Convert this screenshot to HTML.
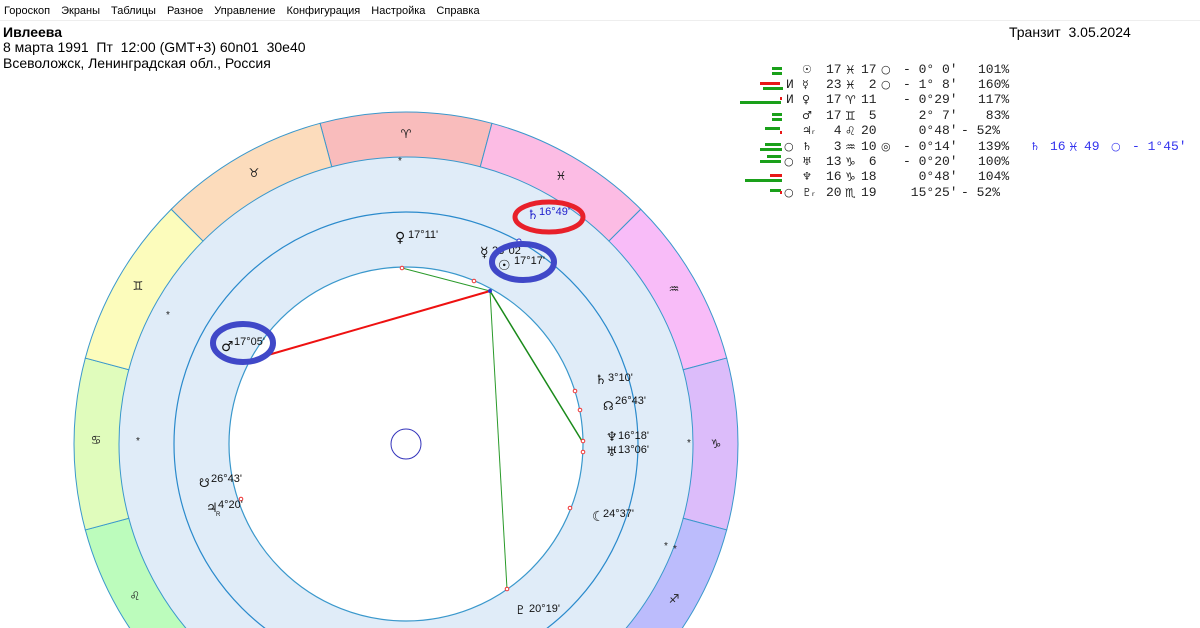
<!DOCTYPE html>
<html><head><meta charset="utf-8">
<style>
html,body{margin:0;padding:0;width:1200px;height:628px;overflow:hidden;background:#fff;}
body{position:relative;font-family:"Liberation Sans","DejaVu Sans",sans-serif;}
.menu{position:absolute;top:5px;left:4px;font-size:11px;color:#000;white-space:nowrap;}
.menu span{margin-right:11px;}
.hdr{position:absolute;left:3px;font-size:14px;white-space:nowrap;color:#000;}
.row{position:absolute;left:0;width:1200px;height:14px;font-family:"Liberation Mono","DejaVu Sans Mono",monospace;font-size:13px;color:#222;line-height:14px;}
.row i{position:absolute;font-style:normal;white-space:pre;top:0;}
.row .z{font-family:"DejaVu Sans",sans-serif;font-size:12px;}
.row .p{font-family:"DejaVu Sans",sans-serif;font-size:11px;}
.row .b{color:#3333ee}
.bar{position:absolute;height:3px;}
.g{background:#1aa01a}.r{background:#e81818}
svg{position:absolute;left:0;top:0;}
</style></head><body>
<svg width="1200" height="628" viewBox="0 0 1200 628" font-family="Liberation Sans, DejaVu Sans, sans-serif">
<defs>
<path id="sec" d="M -85.93 -320.69 A 332 332 0 0 1 85.93 -320.69 L 74.28 -277.22 A 287 287 0 0 0 -74.28 -277.22 Z" stroke="#3a98cc" stroke-width="1"/>
</defs>
<g transform="translate(406,444)">
<circle r="287" fill="#e0ecf8"/>
<use href="#sec" fill="#f9bcbc"/>
<use href="#sec" fill="#fcbce4" transform="rotate(30)"/>
<use href="#sec" fill="#f8bcf8" transform="rotate(60)"/>
<use href="#sec" fill="#dcbcfa" transform="rotate(90)"/>
<use href="#sec" fill="#bcbcfc" transform="rotate(120)"/>
<use href="#sec" fill="#bcd0fc" transform="rotate(150)"/>
<use href="#sec" fill="#bcf0f0" transform="rotate(180)"/>
<use href="#sec" fill="#bcfcd8" transform="rotate(210)"/>
<use href="#sec" fill="#bcfcbc" transform="rotate(240)"/>
<use href="#sec" fill="#e0fcbc" transform="rotate(270)"/>
<use href="#sec" fill="#fcfcbc" transform="rotate(300)"/>
<use href="#sec" fill="#fcdcbc" transform="rotate(330)"/>
<circle r="232" fill="none" stroke="#2a8acc" stroke-width="1.2"/>
<circle r="177" fill="#fff" stroke="#3a98cc" stroke-width="1.2"/>
<circle r="15" fill="none" stroke="#3333bb" stroke-width="1"/>
</g>
<g font-family="DejaVu Sans, sans-serif" font-size="12" fill="#222" text-anchor="middle">
<text x="406" y="138">♈&#xFE0E;</text>
<text x="561" y="180">♓&#xFE0E;</text>
<text x="674" y="293">♒&#xFE0E;</text>
<text x="716" y="448">♑&#xFE0E;</text>
<text x="674" y="603">♐&#xFE0E;</text>
<text x="254" y="177">♉&#xFE0E;</text>
<text x="138" y="290">♊&#xFE0E;</text>
<text x="96" y="444">♋&#xFE0E;</text>
<text x="135" y="600">♌&#xFE0E;</text>
</g>
<g font-size="10" fill="#222">
<text x="398" y="164">*</text><text x="166" y="318">*</text><text x="136" y="444">*</text>
<text x="687" y="446">*</text><text x="664" y="549">*</text><text x="673" y="552">*</text>
</g>
<line x1="402" y1="268" x2="490" y2="291" stroke="#2a9a2a" stroke-width="1"/>
<line x1="268" y1="355" x2="490" y2="291" stroke="#ee1111" stroke-width="2"/>
<line x1="490" y1="291" x2="582" y2="441" stroke="#1a8a1a" stroke-width="1.5"/>
<line x1="490" y1="291" x2="507" y2="589" stroke="#2a9a2a" stroke-width="1"/>
<g fill="#fff" stroke="#e33" stroke-width="1">
<circle cx="402" cy="268" r="1.8"/><circle cx="474" cy="281" r="1.8"/><circle cx="575" cy="391" r="1.8"/>
<circle cx="580" cy="410" r="1.8"/><circle cx="583" cy="441" r="1.8"/><circle cx="583" cy="452" r="1.8"/>
<circle cx="570" cy="508" r="1.8"/><circle cx="507" cy="589" r="1.8"/><circle cx="241" cy="499" r="1.8"/>
</g>
<circle cx="490" cy="291" r="2" fill="#33c" /><circle cx="519" cy="241" r="2" fill="#fff" stroke="#33c"/>
<g font-size="12" fill="#111">
<text x="395" y="242" font-family="DejaVu Sans" font-size="14">♀</text><text x="408" y="238" font-size="11">17°11'</text>
<text x="480" y="257" font-family="DejaVu Sans" font-size="14">☿</text><text x="492" y="254" font-size="11">23°02</text>
<text x="498" y="270" font-family="DejaVu Sans" font-size="14">☉</text><text x="514" y="264" font-size="11">17°17'</text>
<text x="221" y="351" font-family="DejaVu Sans" font-size="14">♂</text><text x="234" y="345" font-size="11">17°05'</text>
<text x="595" y="384" font-family="DejaVu Sans" font-size="13">♄</text><text x="608" y="381" font-size="11">3°10'</text>
<text x="603" y="410" font-family="DejaVu Sans" font-size="12">☊</text><text x="615" y="404" font-size="11">26°43'</text>
<text x="606" y="441" font-family="DejaVu Sans" font-size="13">♆</text><text x="618" y="439" font-size="11">16°18'</text>
<text x="606" y="456" font-family="DejaVu Sans" font-size="13">♅</text><text x="618" y="453" font-size="11">13°06'</text>
<text x="592" y="521" font-family="DejaVu Sans" font-size="14">☾</text><text x="603" y="517" font-size="11">24°37'</text>
<text x="199" y="487" font-family="DejaVu Sans" font-size="12">☋</text><text x="211" y="482" font-size="11">26°43'</text>
<text x="206" y="512" font-family="DejaVu Sans" font-size="13">♃</text><text x="216" y="516" font-size="6">R</text><text x="218" y="508" font-size="11">4°20'</text>
<text x="515" y="614" font-family="DejaVu Sans" font-size="12">♇</text><text x="529" y="612" font-size="11">20°19'</text>
<text x="527" y="219" font-family="DejaVu Sans" font-size="13" fill="#2222cc">♄</text><text x="539" y="215" font-size="11" fill="#2222cc">16°49'</text>
</g>
<ellipse cx="549" cy="217" rx="34" ry="15" fill="none" stroke="#e8202a" stroke-width="5"/>
<ellipse cx="523" cy="262" rx="31" ry="18" fill="none" stroke="#4048c8" stroke-width="6"/>
<ellipse cx="243" cy="343" rx="30" ry="19" fill="none" stroke="#4048c8" stroke-width="6"/>
</svg>

<div class="menu"><span>Гороскоп</span><span>Экраны</span><span>Таблицы</span><span>Разное</span><span>Управление</span><span>Конфигурация</span><span>Настройка</span><span>Справка</span></div>
<div style="position:absolute;left:0;top:20px;width:1200px;height:1px;background:#eee"></div>
<div class="hdr" style="top:24px;font-weight:bold;font-size:14px">Ивлеева</div>
<div class="hdr" style="top:39px">8 марта 1991&nbsp; Пт&nbsp; 12:00 (GMT+3) 60n01&nbsp; 30e40</div>
<div class="hdr" style="top:55px">Всеволожск, Ленинградская обл., Россия</div>
<div class="hdr" style="top:24px;left:1009px">Транзит&nbsp; 3.05.2024</div>

<!-- table: cols: И 786, planet 802, deg 826, sign 845, min 860, circ 882, asp 903, pct 978 -->
<div class="row" style="top:63px"><i class="p" style="left:802px">☉</i><i style="left:826px">17</i><i class="z" style="left:845px">♓</i><i style="left:861px">17</i><i class="p" style="left:881px">○</i><i style="left:903px">- 0° 0'</i><i style="left:978px">101%</i></div>
<div class="row" style="top:78px"><i style="left:786px">И</i><i class="p" style="left:802px">☿</i><i style="left:826px">23</i><i class="z" style="left:845px">♓</i><i style="left:861px"> 2</i><i class="p" style="left:881px">○</i><i style="left:903px">- 1° 8'</i><i style="left:978px">160%</i></div>
<div class="row" style="top:93px"><i style="left:786px">И</i><i class="p" style="left:802px">♀</i><i style="left:826px">17</i><i class="z" style="left:845px">♈</i><i style="left:861px">11</i><i style="left:903px">- 0°29'</i><i style="left:978px">117%</i></div>
<div class="row" style="top:109px"><i class="p" style="left:802px">♂</i><i style="left:826px">17</i><i class="z" style="left:845px">♊</i><i style="left:861px"> 5</i><i style="left:903px">  2° 7'</i><i style="left:978px"> 83%</i></div>
<div class="row" style="top:124px"><i class="p" style="left:802px">♃ᵣ</i><i style="left:826px"> 4</i><i class="z" style="left:845px">♌</i><i style="left:861px">20</i><i style="left:903px">  0°48'</i><i style="left:961px">- 52%</i></div>
<div class="row" style="top:140px"><i class="p" style="left:784px">○</i><i class="p" style="left:802px">♄</i><i style="left:826px"> 3</i><i class="z" style="left:845px">♒</i><i style="left:861px">10</i><i class="p" style="left:881px">◎</i><i style="left:903px">- 0°14'</i><i style="left:978px">139%</i>
<i class="p b" style="left:1030px">♄</i><i class="b" style="left:1050px">16</i><i class="z b" style="left:1068px">♓</i><i class="b" style="left:1084px">49</i><i class="p b" style="left:1111px">○</i><i class="b" style="left:1132px">- 1°45'</i></div>
<div class="row" style="top:155px"><i class="p" style="left:784px">○</i><i class="p" style="left:802px">♅</i><i style="left:826px">13</i><i class="z" style="left:845px">♑</i><i style="left:861px"> 6</i><i style="left:903px">- 0°20'</i><i style="left:978px">100%</i></div>
<div class="row" style="top:170px"><i class="p" style="left:802px">♆</i><i style="left:826px">16</i><i class="z" style="left:845px">♑</i><i style="left:861px">18</i><i style="left:903px">  0°48'</i><i style="left:978px">104%</i></div>
<div class="row" style="top:186px"><i class="p" style="left:784px">○</i><i class="p" style="left:802px">♇ᵣ</i><i style="left:826px">20</i><i class="z" style="left:845px">♏</i><i style="left:861px">19</i><i style="left:903px"> 15°25'</i><i style="left:961px">- 52%</i></div>

<div class="bar g" style="left:772px;top:67px;width:10px"></div><div class="bar g" style="left:772px;top:72px;width:10px"></div>
<div class="bar r" style="left:760px;top:82px;width:20px"></div><div class="bar g" style="left:763px;top:87px;width:20px"></div>
<div class="bar g" style="left:740px;top:101px;width:41px"></div><div class="bar r" style="left:780px;top:97px;width:2px"></div>
<div class="bar g" style="left:772px;top:113px;width:10px"></div><div class="bar g" style="left:772px;top:118px;width:10px"></div>
<div class="bar g" style="left:765px;top:127px;width:15px"></div><div class="bar r" style="left:780px;top:131px;width:2px"></div>
<div class="bar g" style="left:765px;top:143px;width:16px"></div><div class="bar g" style="left:760px;top:148px;width:22px"></div>
<div class="bar g" style="left:767px;top:155px;width:14px"></div><div class="bar g" style="left:760px;top:160px;width:21px"></div>
<div class="bar r" style="left:770px;top:174px;width:12px"></div><div class="bar g" style="left:745px;top:179px;width:37px"></div>
<div class="bar g" style="left:770px;top:189px;width:11px"></div><div class="bar r" style="left:780px;top:191px;width:2px"></div>
</body></html>
